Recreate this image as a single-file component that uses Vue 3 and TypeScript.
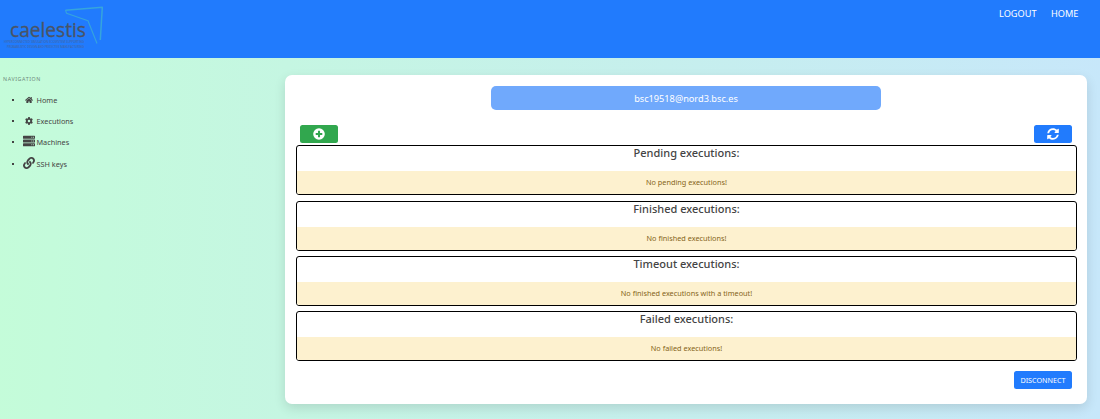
<script setup lang="ts">
interface Section {
  id: string
  title: string
  message: string
}

const sections: Section[] = [
  { id: 'pending', title: 'Pending executions:', message: 'No pending executions!' },
  { id: 'finished', title: 'Finished executions:', message: 'No finished executions!' },
  { id: 'timeout', title: 'Timeout executions:', message: 'No finished executions with a timeout!' },
  { id: 'failed', title: 'Failed executions:', message: 'No failed executions!' },
]
</script>

<template>
  <div class="page">
    <header class="topbar">
      <svg class="logo" width="106" height="52" viewBox="0 0 106 52">
        <g fill="none" stroke="#36a5dc" stroke-linejoin="round">
          <path d="M65.500 10.200 L102.300 7.300 L100.300 40" stroke-width="1.500" />
          <path d="M65.500 10.200 L66.500 13.200 L88 20.800 L97 43.500" stroke-width="1.100" />
        </g>
        <text class="logo-name" x="10" y="37.300" textLength="76" lengthAdjust="spacingAndGlyphs">caelestis</text>
        <text class="logo-sub" x="4" y="43.400" textLength="80" lengthAdjust="spacingAndGlyphs">HYPERCONNECTED SIMULATION ECOSYSTEM SUPPORTING</text>
        <text class="logo-sub" x="7" y="48.200" textLength="77" lengthAdjust="spacingAndGlyphs">PROBABILISTIC DESIGN AND PREDICTIVE MANUFACTURING</text>
      </svg>
      <nav class="toplinks">
        <a class="logout">LOGOUT</a>
        <a class="home">HOME</a>
      </nav>
    </header>
    <div class="body">
      <aside class="sidebar">
        <p class="nav-title">NAVIGATION</p>
        <ul class="nav-list">
          <li>
            <svg class="small" width="8" height="8" viewBox="0 0 576 512"><path fill="currentColor" d="M280 148L96 300v164a16 16 0 0 0 16 16h112a16 16 0 0 0 16-16v-96h96v96a16 16 0 0 0 16 16h112a16 16 0 0 0 16-16V300L296 148a12 12 0 0 0-16 0zM571 251l-83-69V44a12 12 0 0 0-12-12h-56a12 12 0 0 0-12 12v72l-89-74a48 48 0 0 0-61 0L5 251a12 12 0 0 0-2 17l26 31a12 12 0 0 0 17 2l235-194a12 12 0 0 1 16 0l235 194a12 12 0 0 0 17-2l25-31a12 12 0 0 0-3-17z" /></svg>
            <span class="n-home">Home</span>
          </li>
          <li>
            <svg class="small" width="8" height="8" viewBox="0 0 512 512"><path fill="currentColor" d="M487 315l-43-25a192 192 0 0 0 0-70l43-25c5-3 7-9 6-14a249 249 0 0 0-55-95c-4-4-10-5-15-2l-43 25a190 190 0 0 0-60-35V25c0-6-4-11-9-12a251 251 0 0 0-110 0c-6 1-9 6-9 12v49a195 195 0 0 0-61 35L88 84c-5-3-11-2-14 2a248 248 0 0 0-56 95c-2 6 1 12 6 14l42 25a194 194 0 0 0 0 70l-42 25c-5 3-8 9-6 14a249 249 0 0 0 56 95c3 4 9 5 14 2l43-24a190 190 0 0 0 61 35v49c0 6 3 11 9 12a251 251 0 0 0 109 0c6-1 10-6 10-12v-49a195 195 0 0 0 60-35l43 25c5 3 11 2 15-3a248 248 0 0 0 55-94c2-6-1-12-6-15zM256 335a80 80 0 1 1 0-160 80 80 0 0 1 0 160z" /></svg>
            <span class="n-exec">Executions</span>
          </li>
          <li class="tall">
            <svg width="12" height="12" viewBox="0 0 512 512"><path fill="currentColor" fill-rule="evenodd" d="M24 32h464q24 0 24 24v80q0 24-24 24H24q-24 0-24-24V56q0-24 24-24zm0 160h464q24 0 24 24v80q0 24-24 24H24q-24 0-24-24v-80q0-24 24-24zm0 160h464q24 0 24 24v80q0 24-24 24H24q-24 0-24-24v-80q0-24 24-24zM360 76h34v40h-34zm68 0h34v40h-34zM360 236h34v40h-34zm68 0h34v40h-34zM360 396h34v40h-34zm68 0h34v40h-34z" /></svg>
            <span class="n-mach">Machines</span>
          </li>
          <li>
            <svg width="12" height="12" viewBox="0 0 512 512"><path fill="currentColor" d="M326.600 185.400c59.700 59.800 58.900 155.700.400 214.600-.100.100-.200.300-.400.400l-67.200 67.200c-59.300 59.300-155.700 59.300-215 0-59.300-59.300-59.300-155.700 0-215l37.100-37.100c9.800-9.800 26.800-3.300 27.300 10.600.600 17.700 3.800 35.500 9.700 52.700 2 5.800.600 12.300-3.800 16.600l-13.100 13.100c-28 28-28.900 73.700-1.200 102 28 28.600 74.100 28.700 102.300.500l67.200-67.200c28.200-28.200 28.100-73.800 0-101.800-3.700-3.700-7.400-6.600-10.300-8.600a16 16 0 0 1-6.900-12.600c-.400-10.600 3.300-21.500 11.700-29.800l21.100-21.100c5.500-5.500 14.200-6.200 20.600-1.700a152.500 152.500 0 0 1 20.500 17.200zM467.500 44.400c-59.300-59.300-155.700-59.300-215 0l-67.200 67.200c-.100.100-.300.300-.400.400-58.600 58.900-59.400 154.800.400 214.600a152.500 152.500 0 0 0 20.500 17.200c6.400 4.500 15.100 3.800 20.600-1.700l21.100-21.100c8.400-8.400 12.100-19.200 11.700-29.800a16 16 0 0 0-6.900-12.600c-2.900-2-6.600-4.900-10.300-8.600-28.100-28.100-28.200-73.600 0-101.800l67.200-67.200c28.200-28.200 74.300-28.100 102.300.500 27.800 28.300 26.900 73.900-1.200 102l-13.100 13.100c-4.400 4.400-5.800 10.800-3.800 16.600 5.900 17.200 9 35 9.700 52.700.500 13.900 17.500 20.400 27.300 10.600l37.100-37.100c59.300-59.300 59.300-155.700 0-215z" /></svg>
            <span class="n-ssh">SSH keys</span>
          </li>
        </ul>
      </aside>
      <main class="card">
        <div class="account"><span>bsc19518@nord3.bsc.es</span></div>
        <div class="toolbar">
          <button class="btn add" type="button" aria-label="Add">
            <svg width="12" height="12" viewBox="0 0 512 512"><path fill="#fff" fill-rule="evenodd" d="M256 8a248 248 0 1 0 0 496 248 248 0 0 0 0-496zM212 116h88v96h96v88h-96v96h-88v-96h-96v-88h96z" /></svg>
          </button>
          <button class="btn refresh" type="button" aria-label="Refresh">
            <svg width="12" height="12" viewBox="0 0 512 512"><path fill="#fff" d="M370.700 133.300C339.500 104 298.900 88 255.800 88c-77.500.100-144.300 53.200-162.800 126.900-1.300 5.400-6.100 9.100-11.700 9.100H24.100c-7.500 0-13.200-6.800-11.800-14.200C33.900 94.900 134.800 8 256 8c66.400 0 126.800 26.100 171.300 68.700L463 41c15.100-15.100 41-4.400 41 17v134c0 13.300-10.700 24-24 24H346c-21.400 0-32.100-25.900-17-41l41.700-41.700zM32 296h134c21.400 0 32.100 25.900 17 41l-41.800 41.800c31.300 29.300 71.900 45.300 115 45.300 77.400-.100 144.200-53.100 162.800-126.800 1.300-5.400 6.100-9.100 11.700-9.100h57.300c7.500 0 13.200 6.800 11.800 14.200C478.100 417.100 377.200 504 256 504c-66.400 0-126.800-26.100-171.300-68.700L49 471c-15.100 15.100-41 4.400-41-17V320c0-13.300 10.700-24 24-24z" /></svg>
          </button>
        </div>
        <div class="sections">
          <section v-for="s in sections" :key="s.id" class="section" :class="s.id">
            <h2><span>{{ s.title }}</span></h2>
            <p><span>{{ s.message }}</span></p>
          </section>
        </div>
        <div class="footer">
          <button class="btn disconnect" type="button"><span>DISCONNECT</span></button>
        </div>
      </main>
    </div>
  </div>
</template>

<style>
html,
body {
  margin: 0;
  overflow: hidden;
}
</style>

<style scoped>
.page {
  height: 419px;
  box-sizing: border-box;
  font-family: 'Noto Sans', 'Open Sans', sans-serif;
  color: #444;
  background: linear-gradient(91deg, #c4fcd9 0%, #c4fadd 10%, #c5f6e2 26%, #c7e7fa 100%);
  overflow: hidden;
}
.topbar {
  height: 58px;
  background: #217bfd;
  display: flex;
  justify-content: space-between;
  align-items: flex-start;
}
.logo {
  display: block;
}
.logo-name {
  font: 20px 'Open Sans', sans-serif;
  fill: #4a5465;
  stroke: #4a5465;
  stroke-width: 0.3px;
}
.logo-sub {
  font: 3px 'Open Sans', sans-serif;
  fill: #4b6391;
}
.toplinks {
  display: flex;
  gap: 15px;
  padding: 7px 22px 0 0;
  font-size: 9.200px;
  line-height: 14px;
  color: #fff;
}
.logout {
  width: 37px;
}
.home {
  width: 27px;
}
.body {
  display: flex;
  align-items: flex-start;
}
.sidebar {
  width: 285px;
  flex: none;
}
.nav-title {
  margin: 17px 0 0 3px;
  font-size: 5.300px;
  line-height: 8px;
  letter-spacing: 0.600px;
  color: #6f8a7b;
}
.nav-list {
  margin: 6px 0 0;
  padding: 0 0 0 12px;
  list-style: none;
  font-size: 7.300px;
}
.nav-list li {
  display: flex;
  align-items: center;
  height: 21px;
}
.nav-list li.tall {
  height: 22px;
}
.nav-list li::before {
  content: '';
  width: 2px;
  height: 2px;
  background: #444;
  margin-right: 9px;
}
.nav-list svg {
  margin-right: 1.500px;
  margin-bottom: 2px;
}
.nav-list svg.small {
  margin: 0 3.500px 0 2px;
}
.card {
  width: 802px;
  height: 329px;
  margin-top: 17px;
  padding: 11px 10px 0 11px;
  box-sizing: border-box;
  background: #fff;
  border-radius: 7px;
  box-shadow: 0 4px 12px rgba(0, 0, 0, 0.12);
}
.account {
  width: 390px;
  height: 24.400px;
  margin-left: 195px;
  border-radius: 5px;
  background: #70a9fc;
  color: #fff;
  text-align: center;
  font-size: 9.200px;
  line-height: 25px;
}
.toolbar {
  display: flex;
  justify-content: space-between;
  margin-top: 14.600px;
  padding: 0 5px 0 4px;
}
.btn {
  display: flex;
  align-items: center;
  justify-content: center;
  width: 38px;
  height: 18px;
  padding: 0;
  border: 0;
  border-radius: 2.500px;
  background: #217bfd;
  color: #fff;
  font: 7.200px 'Noto Sans', sans-serif;
}
.add {
  background: #31a74e;
}
.sections {
  display: grid;
  row-gap: 5.300px;
  margin-top: 2.300px;
}
.section {
  height: 50px;
  box-sizing: border-box;
  border: 1px solid #000;
  border-radius: 3px;
  overflow: hidden;
}
.section h2 {
  margin: 0;
  height: 25px;
  font-size: 11px;
  font-weight: 500;
  line-height: 13.500px;
  text-align: center;
  color: #444;
}
.section p {
  margin: 0;
  height: 23px;
  background: #fdf1cf;
  color: #856419;
  text-align: center;
  font-size: 7.300px;
  line-height: 23px;
}
.footer {
  display: flex;
  justify-content: flex-end;
  margin-top: 9.800px;
  padding-right: 5px;
}
.disconnect {
  width: 58px;
}
</style>
